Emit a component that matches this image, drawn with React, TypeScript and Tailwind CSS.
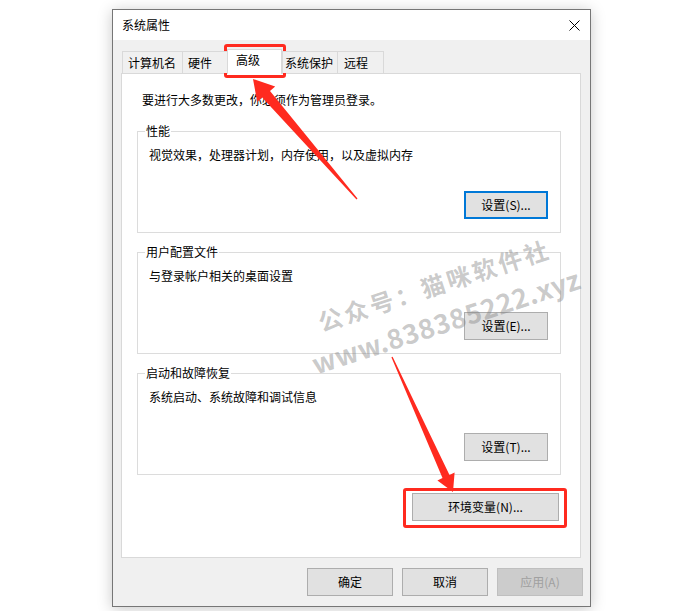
import React from "react";

const ui = "font-['Noto_Sans_CJK_SC','Microsoft_YaHei',sans-serif]";

const tabs = [
  { label: "计算机名", cls: "w-[60px] pl-[5px]" },
  { label: "硬件", cls: "w-[45px] pl-[5px]" },
  { label: "高级", cls: "w-[55px] pl-[8px]", active: true },
  { label: "系统保护", cls: "w-[55px] pl-[2px]" },
  { label: "远程", cls: "w-[47px] pl-[6px] border-r" },
];

const groups = [
  { title: "性能", text: "视觉效果，处理器计划，内存使用，以及虚拟内存", btn: "设置(S)...", focused: true },
  { title: "用户配置文件", text: "与登录帐户相关的桌面设置", btn: "设置(E)..." },
  { title: "启动和故障恢复", text: "系统启动、系统故障和调试信息", btn: "设置(T)..." },
];

function Btn({ label, className = "", focused = false, disabled = false }: { label: string; className?: string; focused?: boolean; disabled?: boolean }) {
  const look = disabled
    ? "bg-[#cccccc] border border-[#bfbfbf] text-[#a0a0a0]"
    : focused
    ? "bg-[#e1e1e1] border-2 border-[#0078d7] text-black"
    : "bg-[#e1e1e1] border border-[#adadad] text-black";
  return (
    <div className={`flex items-center justify-center h-[28px] text-[12px] leading-[16px] ${look} ${className}`}>
      {label}
    </div>
  );
}

function Arrows() {
  return (
    <svg className="absolute left-0 top-0 pointer-events-none" width="689" height="611" viewBox="0 0 689 611">
      {/* arrow to the 高级 tab */}
      <polygon
        fill="#ff2a1f"
        points="253,79 275.2,86.5 270,91 357.5,198.5 356.5,199.5 262.2,97.6 257.2,101.9"
      />
      {/* arrow to 环境变量 */}
      <polygon
        fill="#ff2a1f"
        points="453,492 454.6,472.6 449.5,475 392.6,356.7 391.4,357.3 442.5,478 437.4,480.4"
      />
    </svg>
  );
}

export default function App() {
  return (
    <div className={`relative w-[689px] h-[611px] bg-white overflow-hidden pt-[9px] pl-[112px] ${ui}`}>
      {/* dialog */}
      <div className="w-[479px] h-[598px] border border-[#767676] bg-[#f0f0f0] flex flex-col shadow-[0_2px_14px_rgba(0,0,0,0.22)]">
        {/* title bar */}
        <div className="h-[30px] bg-white flex items-center justify-between pl-[9px] pr-[10px]">
          <span className="text-[12px] leading-[16px] text-black">系统属性</span>
          <svg width="11" height="11" viewBox="0 0 11 11">
            <path d="M0.5 0.5 L10.5 10.5 M10.5 0.5 L0.5 10.5" stroke="#000" strokeWidth="1" />
          </svg>
        </div>

        {/* body */}
        <div className="flex-1 flex flex-col">
          {/* tabs */}
          <div className="mt-[9px] ml-[9px] h-[24px] flex items-end relative z-10">
            {tabs.map((t) =>
              t.active ? (
                <div
                  key={t.label}
                  className={`h-[25px] -mb-px bg-white border-l border-t border-r border-[#d9d9d9] pt-[2px] text-[12px] leading-[16px] text-black ${t.cls}`}
                >
                  {t.label}
                </div>
              ) : (
                <div
                  key={t.label}
                  className={`h-[22px] flex items-center bg-[#f0f0f0] border-l border-t border-[#d9d9d9] text-[12px] leading-[16px] text-black ${t.cls}`}
                >
                  {t.label}
                </div>
              )
            )}
          </div>

          {/* tab panel */}
          <div className="w-[460px] h-[485px] ml-[8px] bg-white border border-[#d9d9d9] flex flex-col text-[12px] leading-[16px] text-black">
            <p className="mt-[18px] ml-[20px]">要进行大多数更改，你必须作为管理员登录。</p>

            {groups.map((g, i) => (
              <div
                key={g.title}
                className={`relative ml-[15px] w-[424px] h-[102px] border border-[#dcdcdc] flex flex-col justify-between pt-[15px] pb-[13px] pl-[11px] pr-[12px] ${i === 0 ? "mt-[23px]" : "mt-[19px]"}`}
              >
                <span className="absolute -top-[9px] left-[7px] px-px bg-white">{g.title}</span>
                <span>{g.text}</span>
                <Btn label={g.btn} focused={g.focused} className="self-end w-[84px]" />
              </div>
            ))}

            <Btn label="环境变量(N)..." className="self-end mt-[18px] mr-[21px] w-[147px]" />
          </div>

          {/* dialog buttons */}
          <div className="mt-[10px] flex justify-end gap-[9px] pr-[7px]">
            <Btn label="确定" className="w-[86px]" />
            <Btn label="取消" className="w-[86px]" />
            <Btn label="应用(A)" disabled className="w-[86px]" />
          </div>
        </div>
      </div>

      {/* watermark */}
      <div className="absolute left-[440px] top-[303px] -translate-x-1/2 -translate-y-1/2 -rotate-[18deg] pointer-events-none whitespace-nowrap text-center font-bold text-[rgba(128,128,128,0.42)]">
        <div className="text-[24px] leading-[38px] tracking-[3px]">公众号：猫咪软件社</div>
        <div className="text-[27px] leading-[38px] tracking-[0.5px]">www.838385222.xyz</div>
      </div>

      {/* annotations */}
      <div className="absolute left-[224px] top-[44px] w-[62px] h-[34px] border-[3px] border-[#ff2a1f] rounded-[3px]" />
      <div className="absolute left-[403px] top-[488px] w-[164px] h-[40px] border-[3px] border-[#ff2a1f] rounded-[3px]" />
      <Arrows />
    </div>
  );
}
